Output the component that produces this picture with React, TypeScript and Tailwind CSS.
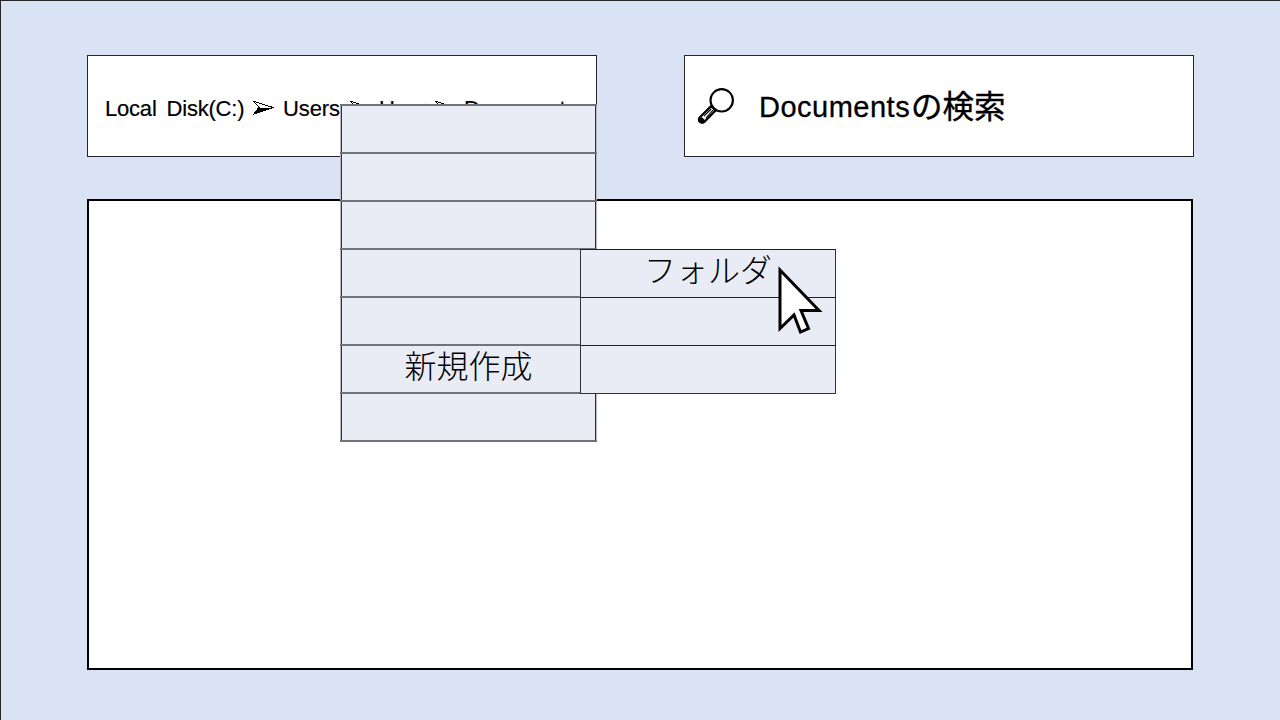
function Arrow() {
  return (
    <svg width="21" height="14" viewBox="0 0 21 14" className="-mt-0.5 block shrink-0" shapeRendering="crispEdges">
      <path d="M1 .5 L20 6.5 L1 13 L6 6.5 Z" fill="#fff" stroke="#000" strokeWidth="1" />
      <path d="M5 6.5 L20 6.5 L0 13.5 Z" fill="#000" />
    </svg>
  );
}

function Magnifier() {
  return (
    <svg width="38" height="38" viewBox="0 0 38 38" className="block shrink-0">
      <circle cx="24.7" cy="13.3" r="11.2" fill="#fff" stroke="#000" strokeWidth="2.1" />
      <path d="M13.8 19.4 L3 30.2 Q1 32.5 2.8 34.7 Q5 36.5 7.6 34.6 L18.3 23.8 Q17 20.5 13.8 19.4Z" fill="#fff" stroke="#000" strokeWidth="2.2" />
      <path d="M2.6 30.5 Q5.5 31 7.8 34.5 Q4.8 36.7 2.7 34.7 Q1 32.5 2.6 30.5Z" fill="#000" stroke="#000" strokeWidth="1.8" />
      <path d="M14.2 22 L7 29.2 M16 23.2 L9 31" stroke="#000" strokeWidth="1.1" />
    </svg>
  );
}

function Row({ label }: { label?: string }) {
  return (
    <div className="h-12 border-t-2 border-[#727378]">
      <div className="h-full border-x border-[#b8bac0]">
        <div className="flex h-full justify-center border-x border-[#303136]">
          <span className="-mt-1 text-[32px] leading-[44px] font-light whitespace-nowrap">{label}</span>
        </div>
      </div>
    </div>
  );
}

function SubRow({ label }: { label?: string }) {
  return (
    <div className="flex h-12 justify-center border-t border-[#202024]">
      <span className="text-[32px] leading-[37px] font-light whitespace-nowrap">{label}</span>
    </div>
  );
}

const menuItems = ["", "", "", "", "", "新規作成", ""];
const subItems = ["フォルダ", "", ""];

export default function App() {
  return (
    <div className="relative h-[720px] w-[1280px] overflow-hidden border-t border-l border-[#262428] bg-[#dae3f3] pt-[54px] pl-[86px] font-['Liberation_Sans','Noto_Sans_CJK_JP',sans-serif] text-black">
      <div className="flex gap-[87px]">
        <div className="flex h-[102px] w-[510px] items-center overflow-hidden border border-[#262428] bg-white pt-[5px] pl-[17px] text-[22px] leading-6 whitespace-nowrap">
          <span className="w-[148px] shrink-0 tracking-[-0.2px] [word-spacing:4px] [-webkit-text-stroke:0.2px_black]">Local Disk(C:)</span>
          <Arrow />
          <span className="w-[76px] shrink-0 pl-[9px] tracking-[-0.1px] [-webkit-text-stroke:0.2px_black]">Users</span>
          <Arrow />
          <span className="w-[64px] shrink-0 pl-[8px] [-webkit-text-stroke:0.2px_black]">User</span>
          <Arrow />
          <span className="pl-[8px] tracking-[0.2px] [-webkit-text-stroke:0.2px_black]">Documents</span>
        </div>
        <div className="flex h-[102px] w-[510px] items-center border border-[#262428] bg-white pl-[12px]">
          <Magnifier />
          <span className="mt-0.5 ml-[24px] w-[152px] shrink-0 text-[29px] leading-9 tracking-[0.5px] [-webkit-text-stroke:0.3px_black]">Documents</span>
          <span className="mt-0.5 text-[31.5px] leading-9 [-webkit-text-stroke:0.4px_black]">の検索</span>
        </div>
      </div>
      <div className="mt-[42px] h-[471px] w-[1106px] border-2 border-black bg-white" />

      <div className="absolute top-[103px] left-[339px] w-[257px] border-b-2 border-[#727378] bg-[#e9ebf5] font-['Noto_Sans_CJK_JP',sans-serif]">
        {menuItems.map((label, i) => (
          <Row key={i} label={label} />
        ))}
      </div>

      <div className="absolute top-[248px] left-[579px] w-[256px] border-x border-b border-[#303136] bg-[#e9ebf5] font-['Noto_Sans_CJK_JP',sans-serif]">
        {subItems.map((label, i) => (
          <SubRow key={i} label={label} />
        ))}
      </div>

      <svg width="48" height="72" viewBox="0 0 48 72" className="absolute top-[265px] left-[776px]">
        <path d="M3 4 L42 44.5 L24 44.5 L31.5 62.5 L23.5 66 L17 49 L3 62.5 Z" fill="#fff" stroke="#000" strokeWidth="3" />
      </svg>
    </div>
  );
}
